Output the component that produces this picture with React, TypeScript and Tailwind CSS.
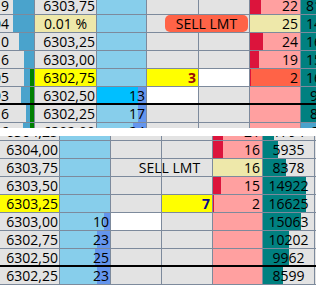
import React from "react";

type Bar = { w: number; c: string; side?: "l" | "r"; off?: number };
type C = {
  w: string;
  bg: string;
  t?: string;
  al?: "l" | "c" | "r";
  p?: string;
  tc?: string;
  bars?: Bar[];
  nb?: boolean;
  tag?: React.ReactNode;
};

// palette
const GR = "bg-[#e3e3e3]";
const SKY = "bg-[#87ceeb]";
const DSKY = "bg-[#00bfff]";
const PINK = "bg-[#ffa0a0]";
const GOLD = "bg-[#eee8aa]";
const YEL = "bg-[#ffff00]";
const WH = "bg-white";
const TOM = "bg-[#ff6347]";
const TEAL = "bg-[#008080]";
const STEEL = "bg-[#4aa3cc]";

const steel = "#4aa3cc";
const green = "#008000";
const corn = "#6495ed";
const crim = "#dc143c";
const teal = "#008080";

function Cell({ c }: { c: C }) {
  const just =
    c.al === "c" ? "justify-center" : c.al === "l" ? "justify-start" : "justify-end";
  return (
    <div
      className={`relative flex h-full shrink-0 items-center whitespace-nowrap ${c.w} ${c.bg} ${just} ${
        c.p ?? (c.al === "c" ? "" : "pr-[2px]")
      } ${c.nb ? "" : "border-r border-[#7d8a9c]"}`}
    >
      {c.bars?.map((b, i) => (
        <div
          key={i}
          className="absolute inset-y-0"
          style={{
            width: b.w,
            background: b.c,
            ...(b.side === "l" ? { left: b.off ?? 0 } : { right: b.off ?? 0 }),
          }}
        />
      ))}
      {c.t && <span className={`relative ${c.tc ?? ""}`}>{c.t}</span>}
      {c.tag}
    </div>
  );
}

function Row({ cells, sep }: { cells: C[]; sep?: boolean }) {
  return (
    <div
      className={`flex h-[18px] shrink-0 ${
        sep ? "border-b-2 border-black" : "border-b border-[#7d8a9c]"
      }`}
    >
      {cells.map((c, i) => (
        <Cell key={i} c={c} />
      ))}
    </div>
  );
}

function SellTag({ filled }: { filled?: boolean }) {
  return (
    <div
      className={`absolute right-[1px] top-0 flex h-[17px] w-[83px] items-center justify-center rounded-[5px] ${
        filled ? "bg-[#ff6347]" : ""
      }`}
    >
      SELL LMT
    </div>
  );
}

// top panel helpers
const tA = (t: string): C => ({ w: "w-[13px]", bg: GR, t, p: "pr-[4px]", nb: true });
const tB = (bar: number, mark?: boolean): C => ({
  w: "w-[22px]",
  bg: GR,
  p: "",
  bars: mark
    ? [
        { w: bar, c: steel, off: 4 },
        { w: 4, c: green },
      ]
    : [{ w: bar, c: steel }],
});
const tC = (t: string, bg = GR): C => ({ w: "w-[62px]", bg, t, p: "pr-[1px]" });
const tD = (bg = SKY, t?: string, bar = 0): C => ({
  w: "w-[50px]",
  bg,
  t,
  p: "pr-[1px]",
  bars: bar ? [{ w: bar, c: corn }] : [],
});
const tE = (bg = GR, t?: string, tc?: string): C => ({ w: "w-[52px]", bg, t, tc });
const tF = (bg = GR, tag?: React.ReactNode): C => ({ w: "w-[51px]", bg, tag });
const tG = (bg = PINK, t?: string, red = 0): C => ({
  w: "w-[51px]",
  bg,
  t,
  bars: red ? [{ w: red, c: crim, side: "l" }] : [],
});
const tH = (t: string, bg = TEAL): C => ({ w: "w-[51px]", bg, t, al: "c" });

// bottom panel helpers
const bC = (t: string, bg = GR): C => ({ w: "w-[60px]", bg, t, p: "pr-[1px]" });
const bD = (t?: string, bar = 0, bg = SKY): C => ({
  w: "w-[51px]",
  bg,
  t,
  p: "pr-[1px]",
  bars: bar ? [{ w: bar, c: corn }] : [],
});
const bE = (bg = GR): C => ({ w: "w-[51px]", bg });
const bF = (bg = GR, t?: string, tc?: string, tag?: React.ReactNode): C => ({
  w: "w-[51px]",
  bg,
  t,
  tc,
  tag,
});
const bG = (bg = PINK, t?: string, red = 0): C => ({
  w: "w-[50px]",
  bg,
  t,
  bars: red ? [{ w: red, c: crim, side: "l" }] : [],
});
const bH = (t: string, bar: number): C => ({
  w: "w-[52px]",
  bg: GR,
  t,
  al: "c",
  bars: [{ w: bar, c: teal, side: "l" }],
});
const bZ: C = { w: "w-[4px]", bg: GR, nb: true };

export default function App() {
  return (
    <div className="h-[285px] w-[316px] overflow-hidden bg-white font-['Open_Sans',sans-serif] text-[14px] leading-[17px] text-black">
      <div className="h-[128px] overflow-hidden">
        <div className="-mt-[3px] flex flex-col">
          <Row cells={[tA("9"), tB(21), tC("6303,75"), tD(), tE(), tF(), tG(PINK, "22", 11), tH("81524")]} />
          <Row
            cells={[
              tA("04"),
              tB(21),
              { w: "w-[62px]", bg: GOLD, t: "0.01 %", al: "c" },
              tD(),
              tE(),
              tF(GR, <SellTag filled />),
              tG(GOLD, "25"),
              tH("14906"),
            ]}
          />
          <Row cells={[tA("0"), tB(15), tC("6303,25"), tD(), tE(), tF(), tG(PINK, "24", 13), tH("16112")]} />
          <Row cells={[tA("6"), tB(10), tC("6303,00"), tD(), tE(), tF(), tG(PINK, "19", 9), tH("15387")]} />
          <Row
            cells={[
              tA("05"),
              tB(6, true),
              tC("6302,75", YEL),
              tD(),
              tE(YEL, "3", "font-bold text-[#9b0a0a]"),
              tF(WH),
              tG(TOM, "2", 1),
              tH("16244"),
            ]}
          />
          <Row
            sep
            cells={[tA("03"), tB(9, true), tC("6302,50"), tD(DSKY, "13", 8), tE(WH), tF(), tG(), tH("9890")]}
          />
          <Row cells={[tA("16"), tB(4, true), tC("6302,25"), tD(SKY, "17", 8), tE(), tF(), tG(), tH("8774")]} />
          <Row
            cells={[tA("6"), tB(7, true), tC("6302,00"), tD(SKY, "24", 13), tE(), tF(), tG(), tH("6312", STEEL)]}
          />
        </div>
      </div>

      <div className="h-[8px] bg-white" />

      <div className="h-[149px] overflow-hidden">
        <div className="-mt-[13px] flex flex-col">
          <Row cells={[bC("6304,25"), bD(), bE(), bF(), bG(PINK, "21", 10), bH("1794", 11), bZ]} />
          <Row cells={[bC("6304,00"), bD(), bE(), bF(), bG(PINK, "16", 10), bH("5935", 15), bZ]} />
          <Row
            cells={[bC("6303,75"), bD(), bE(), bF(GR, undefined, undefined, <SellTag />), bG(GOLD, "16"), bH("8378", 23), bZ]}
          />
          <Row cells={[bC("6303,50"), bD(), bE(), bF(), bG(PINK, "15", 8), bH("14922", 43), bZ]} />
          <Row
            cells={[
              bC("6303,25", YEL),
              bD(),
              bE(),
              bF(YEL, "7", "font-bold text-[#0a0a8c]"),
              bG(PINK, "2", 1),
              bH("16625", 43),
              bZ,
            ]}
          />
          <Row cells={[bC("6303,00"), bD("10", 6), bE(WH), bF(), bG(), bH("15063", 38), bZ]} />
          <Row cells={[bC("6302,75"), bD("23", 13), bE(), bF(), bG(), bH("10202", 26), bZ]} />
          <Row sep cells={[bC("6302,50"), bD("25", 15), bE(), bF(), bG(), bH("9962", 26), bZ]} />
          <Row cells={[bC("6302,25"), bD("23", 13), bE(), bF(), bG(), bH("8599", 20), bZ]} />
        </div>
      </div>
    </div>
  );
}
